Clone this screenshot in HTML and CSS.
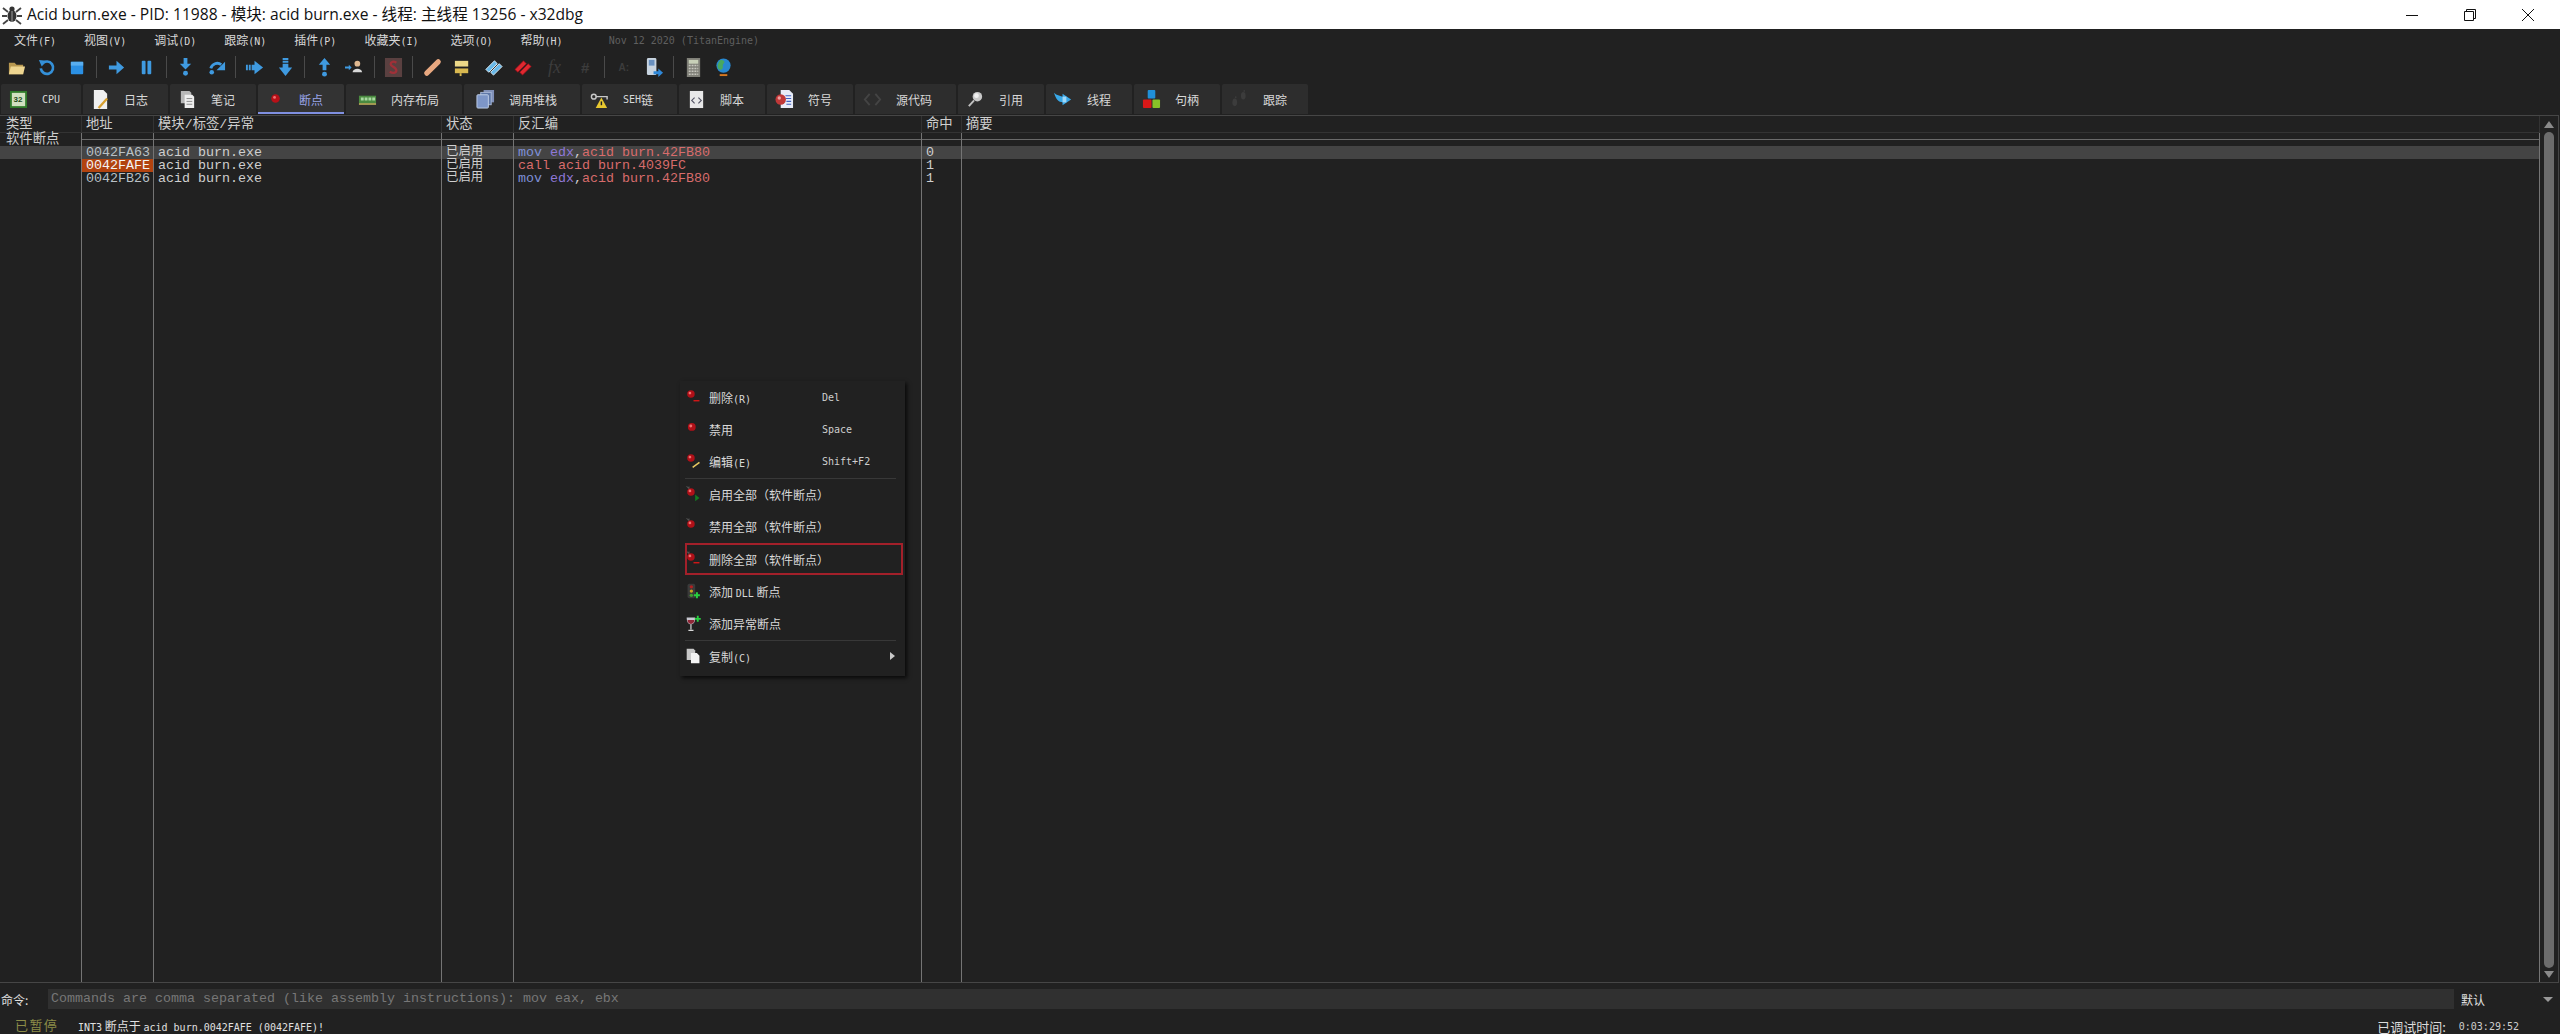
FILE: index.html
```html
<!DOCTYPE html>
<html lang="zh">
<head>
<meta charset="utf-8">
<title>Acid burn.exe - x32dbg</title>
<link rel="stylesheet" href="styles.css">
</head>
<body>
<svg class="sprite" aria-hidden="true">
  <symbol id="ball" viewBox="0 0 20 20"><circle cx="8" cy="7" r="4.6" fill="#b01018"/><circle cx="6.8" cy="5.8" r="1.7" fill="#f07070"/></symbol>
  <symbol id="ball-minus" viewBox="0 0 20 20"><circle cx="7" cy="6" r="4.4" fill="#b01018"/><circle cx="5.8" cy="4.8" r="1.6" fill="#f07070"/><rect x="10" y="13" width="7" height="1.6" fill="#d81818"/></symbol>
  <symbol id="ball-pen" viewBox="0 0 20 20"><circle cx="7" cy="6" r="4.4" fill="#b01018"/><circle cx="5.8" cy="4.8" r="1.6" fill="#f07070"/><path d="M9 17l8-6" stroke="#e8c860" stroke-width="1.8"/></symbol>
  <symbol id="ball-play" viewBox="0 0 20 20"><path d="M2 0l1 2 2-1-1 2 2 1-2 .5" stroke="#666" fill="none" stroke-width=".8"/><circle cx="7" cy="7" r="4.4" fill="#b01018"/><circle cx="5.8" cy="5.8" r="1.6" fill="#f07070"/><path d="M12 10l5 4-5 4z" fill="#127a20"/></symbol>
  <symbol id="ball-star" viewBox="0 0 20 20"><path d="M2 0l1 2 2-1-1 2 2 1-2 .5" stroke="#666" fill="none" stroke-width=".8"/><circle cx="7" cy="7" r="4.4" fill="#b01018"/><circle cx="5.8" cy="5.8" r="1.6" fill="#f07070"/></symbol>
  <symbol id="ball-star-minus" viewBox="0 0 20 20"><path d="M2 0l1 2 2-1-1 2 2 1-2 .5" stroke="#666" fill="none" stroke-width=".8"/><circle cx="7" cy="7" r="4.4" fill="#b01018"/><circle cx="5.8" cy="5.8" r="1.6" fill="#f07070"/><rect x="10" y="13" width="7" height="1.6" fill="#d81818"/></symbol>
  <symbol id="light" viewBox="0 0 20 20"><rect x="3" y="1" width="9" height="17" rx="2" fill="#3a3a3a"/><circle cx="7.5" cy="4.5" r="2" fill="#b02020"/><circle cx="7.5" cy="9.5" r="2" fill="#c8a020"/><circle cx="7.5" cy="14.5" r="2" fill="#40a030"/><path d="M14 11v7M10.5 14.5h7" stroke="#28d040" stroke-width="2.4"/></symbol>
  <symbol id="wine" viewBox="0 0 20 20"><path d="M2 3h10c0 5-1.5 8-5 8s-5-3-5-8z" fill="#c8c8d0"/><path d="M3 6h8c0 3-1.5 4.5-4 4.5S3 9 3 6z" fill="#902838"/><path d="M7 11v6M4 18h6" stroke="#d8d8d8" stroke-width="1.4"/><path d="M15 1v7M11.5 4.5h7" stroke="#28d040" stroke-width="2.2"/></symbol>
  <symbol id="copy" viewBox="0 0 20 20"><path d="M2 1h8l2 2v11H2z" fill="#c8c8c8"/><path d="M7 6h7l3 3v9H7z" fill="#f4f4f4"/></symbol>
  <symbol id="bug" viewBox="0 0 22 22"><ellipse cx="11" cy="12" rx="4.5" ry="6" fill="#333"/><circle cx="11" cy="5" r="2.6" fill="#333"/><path d="M7 8L2 4M6 12H1M7 16l-5 4M15 8l5-4M16 12h5M15 16l5 4" stroke="#444" stroke-width="1.8"/><path d="M11 7v11" stroke="#bbb" stroke-width=".8"/></symbol>
  <symbol id="folder" viewBox="0 0 20 20"><path d="M2 5h6l2 2h7v10H2z" fill="#b89850"/><path d="M2 17l2-8h15l-2 8z" fill="#eed590"/></symbol>
  <symbol id="restart" viewBox="0 0 20 20"><path d="M5.5 6a6.5 6.5 0 1 1-1.500 5" fill="none" stroke="#3490d8" stroke-width="2.8"/><path d="M2 2l8 1-5 6z" fill="#3490d8"/></symbol>
  <symbol id="stop" viewBox="0 0 20 20"><rect x="3" y="4" width="13" height="13" rx="1" fill="#2b90e4"/><rect x="3" y="4" width="13" height="4" fill="#58aef0"/></symbol>
  <symbol id="run" viewBox="0 0 20 20"><path d="M2 8h8V3l8 7-8 7v-5H2z" fill="#3f9ae0"/></symbol>
  <symbol id="pause" viewBox="0 0 20 20"><rect x="5" y="3" width="4" height="14" rx="1" fill="#3f9ae0"/><rect x="11" y="3" width="4" height="14" rx="1" fill="#3f9ae0"/></symbol>
  <symbol id="into" viewBox="0 0 20 20"><path d="M8 0h4v6h4l-6 6-6-6h4z" fill="#3f9ae0"/><circle cx="10" cy="16" r="2.6" fill="#3f9ae0"/></symbol>
  <symbol id="over" viewBox="0 0 20 20"><path d="M4 11a7 7 0 0 1 11-4" fill="none" stroke="#3f9ae0" stroke-width="3"/><path d="M19 4v9h-9z" fill="#3f9ae0"/><circle cx="5" cy="15" r="2.4" fill="#3f9ae0"/></symbol>
  <symbol id="anim-r" viewBox="0 0 20 20"><path d="M1 7h2v6H1zM4 7h2v6H4zM7 7h3V3l9 7-9 7v-4H7z" fill="#3f9ae0"/></symbol>
  <symbol id="anim-d" viewBox="0 0 20 20"><path d="M7 0h6v2H7zM7 3h6v2H7zM7 6h6v4h4l-7 9-7-9h4z" fill="#3f9ae0"/></symbol>
  <symbol id="ret" viewBox="0 0 20 20"><path d="M10 0l6 7h-4v6H8V7H4z" fill="#3f9ae0"/><circle cx="10" cy="17" r="2.6" fill="#3f9ae0"/></symbol>
  <symbol id="user" viewBox="0 0 20 20"><path d="M0 9h4V7l3 3-3 3v-2H0z" fill="#3f9ae0"/><circle cx="13" cy="6" r="3" fill="#e0b890"/><path d="M8 15c0-5 10-5 10 0z" fill="#d8d8d8"/></symbol>
  <symbol id="sbox" viewBox="0 0 20 20"><rect x="1" y="0" width="18" height="20" fill="#5a4040"/><path d="M13 5c-3-2-6-1-6 1.500s6 3 6 6.500-4 3-7 1.500" fill="none" stroke="#a03038" stroke-width="2.4"/></symbol>
  <symbol id="band" viewBox="0 0 20 20"><path d="M4 16L16 4" stroke="#e8a880" stroke-width="5.5" stroke-linecap="round"/></symbol>
  <symbol id="note" viewBox="0 0 20 20"><rect x="2" y="3" width="14" height="6" fill="#ecd888"/><rect x="2" y="11" width="14" height="5" fill="#d8b850"/><rect x="7" y="16" width="2" height="3" fill="#d8b850"/></symbol>
  <symbol id="tags" viewBox="0 0 20 20"><path d="M2 12l9-9 3 3-9 9zM7 15l9-9 3 3-9 9z" fill="#68b8e8" stroke="#e0f0fa" stroke-width="1"/></symbol>
  <symbol id="redtags" viewBox="0 0 20 20"><path d="M1 12l9-9 3 3-9 9zM6 15l9-9 3 3-9 9z" fill="#e02830" stroke="#901018" stroke-width=".8"/></symbol>
  <symbol id="phone" viewBox="0 0 20 20"><rect x="2" y="0" width="10" height="18" rx="1.5" fill="#c8d4e0"/><rect x="4" y="2" width="6" height="6" fill="#6890c0"/><path d="M9 14h5v-3l5 4.500-5 4.500v-3H9z" fill="#2f88d8"/></symbol>
  <symbol id="calc" viewBox="0 0 20 20"><rect x="3" y="0" width="14" height="20" fill="#808078"/><rect x="5" y="2" width="10" height="4" fill="#c8d0b8"/><path d="M5 8h10M5 11h10M5 14h10M5 17h10" stroke="#c8c8c0" stroke-width="1.6" stroke-dasharray="2 1"/></symbol>
  <symbol id="globe" viewBox="0 0 20 20"><circle cx="10" cy="8" r="7.5" fill="#2888d0"/><path d="M7 2c4 0 5 2 3 4s1 4-2 6-5-3-4-5 1-4 3-5z" fill="#48a860"/><path d="M6 18h8" stroke="#d87820" stroke-width="2"/></symbol>
  <symbol id="chip" viewBox="0 0 20 20"><rect x="1" y="1" width="18" height="18" fill="#2f7a2a"/><rect x="3" y="3" width="14" height="14" fill="#d0e0c0"/></symbol>
  <symbol id="doc-pen" viewBox="0 0 20 20"><path d="M3 0h10l4 4v16H3z" fill="#f0f0f0"/><path d="M8 19l9-10" stroke="#d8a030" stroke-width="2.4"/></symbol>
  <symbol id="docs" viewBox="0 0 20 20"><path d="M3 1h9l2 2v11H3z" fill="#b8b8b8"/><path d="M7 5h8l2 2v12H7z" fill="#eeeeee"/><path d="M9 9h6M9 12h6M9 15h6" stroke="#888"/></symbol>
  <symbol id="dot" viewBox="0 0 20 20"><circle cx="10" cy="9" r="4.5" fill="#b81018"/><circle cx="9" cy="7.8" r="1.5" fill="#f07070"/></symbol>
  <symbol id="ram" viewBox="0 0 20 20"><rect x="1" y="6" width="18" height="8" fill="#4a8a40"/><path d="M3 8h3v3H3zM7 8h3v3H7zM11 8h3v3h-3zM15 8h3v3h-3z" fill="#a8d8a0"/><path d="M1 14h18v1.500H1z" fill="#d0c060"/></symbol>
  <symbol id="stack" viewBox="0 0 20 20"><rect x="8" y="0" width="11" height="13" fill="#8090b8"/><rect x="5" y="2.5" width="11" height="13" fill="#5f78a8" stroke="#a8b8d8"/><rect x="1" y="5" width="12" height="14" rx="1" fill="#7d96c8" stroke="#c0d0e8"/></symbol>
  <symbol id="seh" viewBox="0 0 20 20"><circle cx="4" cy="7" r="2.5" fill="none" stroke="#c8c8c8" stroke-width="1.5"/><path d="M6 7h12v3" fill="none" stroke="#c8c8c8" stroke-width="1.5"/><path d="M12 8l6 11H6z" fill="#e8c830"/><path d="M12 12v4" stroke="#222" stroke-width="1.5"/></symbol>
  <symbol id="script" viewBox="0 0 20 20"><path d="M3 1h14v18H3z" fill="#e8e8e8"/><path d="M8 8l-3 3 3 3M12 8l3 3-3 3" fill="none" stroke="#556" stroke-width="1.2"/></symbol>
  <symbol id="symdoc" viewBox="0 0 20 20"><path d="M6 0h9l4 4v15H6z" fill="#e8ecf8"/><path d="M11 6h6M11 9h6M12 12h5M12 15h5" stroke="#4060c0" stroke-width="1.2"/><circle cx="6" cy="10" r="5.5" fill="#c03838"/><circle cx="4.5" cy="8.5" r="1.8" fill="#f0a0a0"/></symbol>
  <symbol id="code" viewBox="0 0 20 20"><path d="M7 4l-5 6 5 6M13 4l5 6-5 6" fill="none" stroke="#444" stroke-width="2"/></symbol>
  <symbol id="lens" viewBox="0 0 20 20"><circle cx="12" cy="7" r="5" fill="#c8c8c8"/><circle cx="11" cy="6" r="2.5" fill="#f0f0f0"/><path d="M8.5 11L3 17" stroke="#c0c0c0" stroke-width="2"/></symbol>
  <symbol id="threads" viewBox="0 0 20 20"><path d="M0 3c3 3 6 3 9 4V4l9 6-9 6v-3c-4 0-7-3-9-10z" fill="#38a8e8"/><path d="M9 7h4v6H9z" fill="#a0d8f8"/></symbol>
  <symbol id="blocks" viewBox="0 0 20 20"><rect x="6" y="0" width="8" height="9" rx="1" fill="#2090d8"/><rect x="1" y="10" width="9" height="9" rx="1" fill="#d81818"/><rect x="11" y="10" width="8" height="9" rx="1" fill="#88c028"/></symbol>
  <symbol id="feet" viewBox="0 0 20 20"><ellipse cx="5" cy="13" rx="2.5" ry="4" fill="#3c3c3c"/><ellipse cx="14" cy="6" rx="2.5" ry="4" fill="#3c3c3c"/><circle cx="6" cy="7.5" r=".9" fill="#3c3c3c"/><circle cx="15" cy="1" r=".9" fill="#3c3c3c"/></symbol>
</svg>

<div class="app">
  <header class="titlebar">
    <svg class="title-icon"><use href="#bug"/></svg>
    <span class="title-text">Acid burn.exe - PID: 11988 - 模块: acid burn.exe - 线程: 主线程 13256 - x32dbg</span>
    <div class="winbtns">
      <svg class="winbtn" viewBox="0 0 14 14"><path d="M1 7.500h12" stroke="#111" stroke-width="1"/></svg>
      <svg class="winbtn" viewBox="0 0 14 14"><path d="M1.500 3.500h9v9h-9zM3.500 3.500v-2h9v9h-2" fill="none" stroke="#111" stroke-width="1"/></svg>
      <svg class="winbtn" viewBox="0 0 14 14"><path d="M1 1l12 12M13 1L1 13" stroke="#111" stroke-width="1"/></svg>
    </div>
  </header>

  <nav class="menubar">
    <span class="menu">文件<i>(F)</i></span>
    <span class="menu">视图<i>(V)</i></span>
    <span class="menu">调试<i>(D)</i></span>
    <span class="menu">跟踪<i>(N)</i></span>
    <span class="menu">插件<i>(P)</i></span>
    <span class="menu menu-wide">收藏夹<i>(I)</i></span>
    <span class="menu">选项<i>(O)</i></span>
    <span class="menu">帮助<i>(H)</i></span>
    <span class="version">Nov 12 2020 (TitanEngine)</span>
  </nav>

  <div class="toolbar">
    <span class="tool"><svg><use href="#folder"/></svg></span>
    <span class="tool"><svg><use href="#restart"/></svg></span>
    <span class="tool"><svg><use href="#stop"/></svg></span>
    <span class="tsep"></span>
    <span class="tool"><svg><use href="#run"/></svg></span>
    <span class="tool"><svg><use href="#pause"/></svg></span>
    <span class="tsep"></span>
    <span class="tool"><svg><use href="#into"/></svg></span>
    <span class="tool"><svg><use href="#over"/></svg></span>
    <span class="tsep"></span>
    <span class="tool"><svg><use href="#anim-r"/></svg></span>
    <span class="tool"><svg><use href="#anim-d"/></svg></span>
    <span class="tsep"></span>
    <span class="tool"><svg><use href="#ret"/></svg></span>
    <span class="tool"><svg><use href="#user"/></svg></span>
    <span class="tsep"></span>
    <span class="tool"><svg><use href="#sbox"/></svg></span>
    <span class="tsep"></span>
    <span class="tool"><svg><use href="#band"/></svg></span>
    <span class="tool"><svg><use href="#note"/></svg></span>
    <span class="tool"><svg><use href="#tags"/></svg></span>
    <span class="tool"><svg><use href="#redtags"/></svg></span>
    <span class="tool tool-fx">fx</span>
    <span class="tool tool-hash">#</span>
    <span class="tsep"></span>
    <span class="tool tool-a">A:</span>
    <span class="tool"><svg><use href="#phone"/></svg></span>
    <span class="tsep"></span>
    <span class="tool"><svg><use href="#calc"/></svg></span>
    <span class="tool"><svg><use href="#globe"/></svg></span>
  </div>

  <div class="tabs">
    <div class="tab"><span class="tab-icon chip-wrap"><svg><use href="#chip"/></svg><b>32</b></span><span class="la-tab">CPU</span></div>
    <div class="tab"><span class="tab-icon"><svg><use href="#doc-pen"/></svg></span>日志</div>
    <div class="tab"><span class="tab-icon"><svg><use href="#docs"/></svg></span>笔记</div>
    <div class="tab tab-active"><span class="tab-icon"><svg><use href="#dot"/></svg></span>断点</div>
    <div class="tab tab-wide"><span class="tab-icon"><svg><use href="#ram"/></svg></span>内存布局</div>
    <div class="tab tab-wide"><span class="tab-icon"><svg><use href="#stack"/></svg></span>调用堆栈</div>
    <div class="tab"><span class="tab-icon"><svg><use href="#seh"/></svg></span><span class="la-tab">SEH</span>链</div>
    <div class="tab"><span class="tab-icon"><svg><use href="#script"/></svg></span>脚本</div>
    <div class="tab"><span class="tab-icon"><svg><use href="#symdoc"/></svg></span>符号</div>
    <div class="tab"><span class="tab-icon"><svg><use href="#code"/></svg></span>源代码</div>
    <div class="tab"><span class="tab-icon"><svg><use href="#lens"/></svg></span>引用</div>
    <div class="tab"><span class="tab-icon"><svg><use href="#threads"/></svg></span>线程</div>
    <div class="tab"><span class="tab-icon"><svg><use href="#blocks"/></svg></span>句柄</div>
    <div class="tab"><span class="tab-icon"><svg><use href="#feet"/></svg></span>跟踪</div>
  </div>

  <main class="pane">
    <div class="grid">
      <div class="row row-head">
        <div class="cell">类型</div><div class="cell">地址</div><div class="cell">模块/标签/异常</div><div class="cell">状态</div><div class="cell">反汇编</div><div class="cell">命中</div><div class="cell">摘要</div>
      </div>
      <div class="row row-sub">
        <div class="cell">软件断点</div><div class="cell"></div><div class="cell"></div><div class="cell"></div><div class="cell"></div><div class="cell"></div><div class="cell"></div>
      </div>
      <div class="row row-sel">
        <div class="cell"></div><div class="cell addr">0042FA63</div><div class="cell">acid burn.exe</div><div class="cell status">已启用</div><div class="cell"><span class="c-mov">mov</span> <span class="c-reg">edx</span>,<span class="c-sym">acid burn.42FB80</span></div><div class="cell">0</div><div class="cell"></div>
      </div>
      <div class="row">
        <div class="cell"></div><div class="cell addr addr-cip">0042FAFE</div><div class="cell">acid burn.exe</div><div class="cell status">已启用</div><div class="cell"><span class="c-sym">call acid burn.4039FC</span></div><div class="cell">1</div><div class="cell"></div>
      </div>
      <div class="row">
        <div class="cell"></div><div class="cell addr">0042FB26</div><div class="cell">acid burn.exe</div><div class="cell status">已启用</div><div class="cell"><span class="c-mov">mov</span> <span class="c-reg">edx</span>,<span class="c-sym">acid burn.42FB80</span></div><div class="cell">1</div><div class="cell"></div>
      </div>
      <div class="row row-fill">
        <div class="cell"></div><div class="cell"></div><div class="cell"></div><div class="cell"></div><div class="cell"></div><div class="cell"></div><div class="cell"></div>
      </div>
    </div>
    <div class="scrollbar">
      <span class="sb-up"></span>
      <span class="sb-thumb"></span>
      <span class="sb-down"></span>
    </div>
  </main>

  <div class="cmdbar">
    <span class="cmd-label">命令:</span>
    <span class="cmd-input">Commands are comma separated (like assembly instructions): mov eax, ebx</span>
    <span class="cmd-mode">默认<span class="cmd-arrow"></span></span>
  </div>

  <footer class="statusbar">
    <span class="paused">已暂停</span>
    <span class="status-msg"><i>INT3</i> 断点于 <i>acid burn.0042FAFE (0042FAFE)!</i></span>
    <span class="timer-label">已调试时间:</span>
    <span class="timer">0:03:29:52</span>
  </footer>

  <div class="ctx">
    <div class="ctx-item"><svg><use href="#ball-minus"/></svg><span class="ctx-text">删除<i>(R)</i></span><i class="ctx-key">Del</i></div>
    <div class="ctx-item"><svg><use href="#ball"/></svg><span class="ctx-text">禁用</span><i class="ctx-key">Space</i></div>
    <div class="ctx-item ctx-sep"><svg><use href="#ball-pen"/></svg><span class="ctx-text">编辑<i>(E)</i></span><i class="ctx-key">Shift+F2</i></div>
    <div class="ctx-item"><svg><use href="#ball-play"/></svg><span class="ctx-text">启用全部（软件断点）</span></div>
    <div class="ctx-item"><svg><use href="#ball-star"/></svg><span class="ctx-text">禁用全部（软件断点）</span></div>
    <div class="ctx-item ctx-mark"><svg><use href="#ball-star-minus"/></svg><span class="ctx-text">删除全部（软件断点）</span></div>
    <div class="ctx-item"><svg><use href="#light"/></svg><span class="ctx-text">添加 <i>DLL</i> 断点</span></div>
    <div class="ctx-item ctx-sep"><svg><use href="#wine"/></svg><span class="ctx-text">添加异常断点</span></div>
    <div class="ctx-item"><svg><use href="#copy"/></svg><span class="ctx-text">复制<i>(C)</i></span><span class="ctx-more"></span></div>
  </div>
</div>
</body>
</html>
```
FILE: styles.css
```css
*, *::before, *::after { box-sizing: border-box; }
html, body { margin: 0; padding: 0; background: #212121; }
i { font-style: normal; }
.sprite { display: none; }

.app {
  position: relative;
  width: 2560px;
  height: 1034px;
  overflow: hidden;
  display: flex;
  flex-direction: column;
  background: #212121;
  color: #dcdcdc;
  font-family: "Noto Sans CJK SC", sans-serif;
}

/* title bar */
.titlebar {
  height: 29px;
  flex: none;
  background: #fff;
  display: flex;
  align-items: center;
  padding-left: 1px;
  color: #111;
}
.title-icon { width: 22px; height: 22px; flex: none; margin-right: 4px; }
.title-text { font: 15.6px/29px "Open Sans", "Noto Sans CJK SC", sans-serif; white-space: nowrap; }
.winbtns { margin-left: auto; display: flex; gap: 44px; padding-right: 25px; }
.winbtn { width: 14px; height: 14px; }

/* menu */
.menubar {
  height: 23px;
  flex: none;
  display: flex;
  align-items: center;
  font-size: 12px;
  line-height: 20px;
  color: #d8d8d8;
}
.menu { padding: 0 14px; white-space: nowrap; }
.menu-wide { padding-right: 18px; }
.menu i, .ctx-text i, .ctx-key, .status-msg i, .la-tab, .version, .timer {
  font-family: "DejaVu Sans Mono", monospace;
  font-size: 10px;
}
.version { color: #5f5f5f; margin-left: 32px; }

/* toolbar */
.toolbar { height: 30px; flex: none; display: flex; align-items: center; padding-left: 1px; }
.tool {
  width: 30.65px;
  height: 24px;
  flex: none;
  display: flex;
  align-items: center;
  justify-content: center;
}
.tool svg { width: 19px; height: 19px; }
.tsep { width: 1px; height: 22px; flex: none; margin: 0 3.5px; background: #4a4a4a; }
.tool-fx { color: #3c3c3c; font: italic 18px "Liberation Serif", serif; }
.tool-hash { color: #3c3c3c; font: bold 15px "Liberation Sans", sans-serif; }
.tool-a { color: #3c3c3c; font: bold 10px "Liberation Sans", sans-serif; }

/* tabs */
.tabs {
  height: 30px;
  flex: none;
  margin-top: 2px;
  padding-left: 1px;
  display: grid;
  grid-template-columns: 80px 85px 86px 86px 116px 116px 95px 86px 86px 101px 86px 86px 86px 86px;
  gap: 2px;
}
.tab {
  display: flex;
  align-items: center;
  padding-left: 6px;
  background: #2d2d2d;
  font-size: 12px;
  color: #d8d8d8;
  border-radius: 2px 2px 0 0;
  white-space: nowrap;
}
.tab-wide { padding-left: 10px; }
.tab-icon {
  width: 22px;
  height: 22px;
  flex: none;
  margin-right: 13px;
  display: flex;
  align-items: center;
  justify-content: center;
  position: relative;
}
.tab-icon svg { width: 19px; height: 19px; }
.chip-wrap b {
  position: absolute;
  left: 0;
  right: 0;
  text-align: center;
  font: bold 8px "Liberation Sans", sans-serif;
  color: #1c4a18;
}
.tab-active { background: #333; color: #9aa6ea; box-shadow: inset 0 -2px 0 #7f8fe0; }

/* main grid */
.pane {
  flex: none;
  height: 868px;
  margin-top: 1px;
  margin-right: 1px;
  display: flex;
  border: solid #464646;
  border-width: 1px 1px 1px 0;
}
.grid { flex: 1; display: flex; flex-direction: column; min-width: 0; }
.row {
  flex: none;
  height: 13px;
  display: grid;
  grid-template-columns: 81px 72px 288px 72px 408px 40px 1fr;
  font: 13.33px/13px "Liberation Mono", "Noto Sans CJK SC", monospace;
  color: #cfcfcf;
  white-space: nowrap;
}
.cell { border-left: 1px solid #747474; padding-left: 4px; min-width: 0; }
.cell:first-child { border-left: 0; padding-left: 6px; }
.cell:last-child { border-right: 1px solid #747474; }
.row-head { height: 17px; line-height: 18px; border-bottom: 1px solid #333; }
.row-head .cell { border-color: #333; }
.row-sub .cell:not(:first-child) { background: linear-gradient(#6a6a6a, #6a6a6a) 0 6px / 100% 1px no-repeat; }
.row-sel { background: #444; }
.row-fill { flex: 1; }
.addr { color: #b9c0c6; }
.addr-cip { background: #b2430f; color: #f4f4f4; }
.status { font-size: 12.4px; }
.c-mov { color: #7f90d8; }
.c-reg { color: #8f78d8; }
.c-sym { color: #d86c6c; }

/* scrollbar */
.scrollbar { width: 18px; flex: none; display: flex; flex-direction: column; align-items: center; }
.sb-up { width: 0; height: 0; flex: none; margin-top: 5px; border: solid transparent; border-width: 0 5px 7px; border-bottom-color: #8a8a8a; }
.sb-thumb { width: 10px; flex: 1; margin: 4px 0 3px; background: #6c6c6c; border-radius: 5px; }
.sb-down { width: 0; height: 0; flex: none; margin-bottom: 4px; border: solid transparent; border-width: 7px 5px 0; border-top-color: #8a8a8a; }

/* command bar */
.cmdbar {
  height: 30px;
  flex: none;
  padding-top: 2px;
  display: flex;
  align-items: center;
  font-size: 12px;
}
.cmd-label { width: 48px; flex: none; padding-left: 1px; color: #e0e0e0; }
.cmd-input {
  width: 2406px;
  height: 20px;
  flex: none;
  padding-left: 3px;
  background: #303030;
  color: #777;
  font: 13.33px/20px "Liberation Mono", monospace;
}
.cmd-mode { position: relative; flex: 1; padding-left: 7px; color: #e0e0e0; }
.cmd-arrow {
  position: absolute;
  right: 7px;
  top: 6px;
  border: solid transparent;
  border-width: 5px 5px 0;
  border-top-color: #999;
}

/* status bar */
.statusbar {
  height: 21px;
  flex: none;
  padding-top: 5px;
  display: flex;
  align-items: center;
  font-size: 12px;
  line-height: 15px;
  white-space: nowrap;
}
.paused {
  color: #8c8c48;
  font-size: 13px;
  line-height: 13px;
  letter-spacing: 1.4px;
  margin: 0 0 4px 15px;
  width: 63px;
  flex: none;
}
.status-msg { color: #e0e0e0; }
.timer-label { margin-left: auto; font-size: 13px; color: #dcdcdc; }
.timer { margin: 0 41px 0 13px; color: #cfcfcf; }

/* context menu */
.ctx {
  position: absolute;
  left: 680px;
  top: 381px;
  width: 225px;
  height: 295px;
  background: #212121;
  box-shadow: 2px 2px 4px rgba(0, 0, 0, .75);
  font-size: 12px;
  color: #d8d8d8;
}
.ctx-item {
  position: relative;
  height: 32.4px;
  display: flex;
  align-items: center;
  padding-left: 5px;
  white-space: nowrap;
}
.ctx-item svg { width: 17px; height: 17px; flex: none; margin-right: 7px; }
.ctx-text { width: 113px; flex: none; }
.ctx-key { color: #cfcfcf; }
.ctx-sep::after {
  content: "";
  position: absolute;
  left: 5px;
  right: 9px;
  bottom: -1px;
  height: 1px;
  background: #383838;
}
.ctx-mark::before {
  content: "";
  position: absolute;
  left: 5px;
  top: 0;
  width: 218px;
  height: 32px;
  border: 2px solid #a3202a;
}
.ctx-more {
  position: absolute;
  right: 10px;
  top: 12px;
  border: solid transparent;
  border-width: 4px 0 4px 5px;
  border-left-color: #c8c8c8;
}
```
